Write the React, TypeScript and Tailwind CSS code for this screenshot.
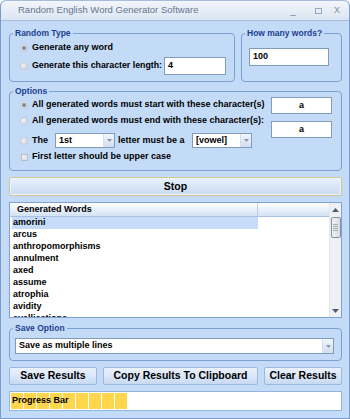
import type { ReactNode } from "react";

const words = ["amorini", "arcus", "anthropomorphisms", "annulment", "axed", "assume", "atrophia", "avidity", "avellications"];

function Radio({ checked }: { checked?: boolean }) {
	return (
		<span className="flex h-[8px] w-[8px] shrink-0 items-center justify-center rounded-full border border-[#c3c8d0] bg-linear-to-br from-[#f6f7f9] to-[#d3d8df]">
			{checked && <span className="h-[4px] w-[4px] rounded-full bg-[#7e8793]" />}
		</span>
	);
}

function Group({ title, className, children }: { title: string; className?: string; children: ReactNode }) {
	return (
		<fieldset className={`min-w-0 rounded-[4px] border border-[#7c9fd4] ${className ?? ""}`}>
			<legend className="ml-[3px] h-[10px] px-[2px] text-[8.5px] leading-[10px] font-bold text-[#1d3f91]">{title}</legend>
			{children}
		</fieldset>
	);
}

function Field({ value, className }: { value: string; className?: string }) {
	return (
		<div className={`flex shrink-0 items-center border border-[#7f9db9] bg-white text-[9px] font-bold text-black ${className ?? ""}`}>
			{value}
		</div>
	);
}

function Combo({ value, className }: { value: string; className?: string }) {
	return (
		<div className={`flex shrink-0 items-stretch border border-[#7f9db9] bg-white text-[9px] font-bold text-black ${className ?? ""}`}>
			<span className="flex flex-1 items-center pl-[3px]">{value}</span>
			<span className="flex w-[11px] items-center justify-center border-l border-[#d3deee] bg-linear-to-b from-[#f2f6fc] to-[#d2deef]">
				<svg width="5" height="3" viewBox="0 0 5 3">
					<path d="M0 0h5L2.5 3z" fill="#8a97ab" />
				</svg>
			</span>
		</div>
	);
}

function Btn({ label, className }: { label: string; className?: string }) {
	return (
		<button className={`flex h-[18px] items-center justify-center rounded-[2px] border border-[#9db8de] bg-linear-to-b from-[#eaf1fc] via-[#dbe7f8] to-[#c7d9f2] text-[10.5px] font-bold text-black ${className ?? ""}`}>
			{label}
		</button>
	);
}

export default function App() {
	return (
		<div className="flex h-[419px] w-[350px] flex-col overflow-hidden rounded-t-[6px] border-x border-b border-[#7c9acb] bg-[#c4dbf8] font-['Liberation_Sans',Arial,sans-serif]">
			<header className="flex h-[21px] shrink-0 items-center rounded-t-[6px] border-t border-b border-[#a6bddf] bg-linear-to-b from-[#f3f6fb] to-[#dbe5f3] pl-[17px] pr-[5px]">
				<span className="text-[9.5px] text-[#66768e]">Random English Word Generator Software</span>
				<div className="ml-auto flex items-center text-[10px] text-[#7b8ba3]">
					<span className="flex w-[16px] justify-center leading-none">_</span>
					<span className="ml-[9px] flex w-[16px] justify-center">
						<span className="h-[6px] w-[7px] border border-[#9aa8bd]" />
					</span>
					<span className="ml-[4px] flex w-[14px] justify-center text-[9px]">X</span>
				</div>
			</header>

			<main className="flex flex-1 flex-col whitespace-nowrap pl-[8px] pr-[7px] pt-[7px] text-[9px] font-bold text-black">
				<div className="flex items-stretch gap-[6px]">
					<Group title="Random Type" className="w-[226px] shrink-0">
						<div className="pb-[6px] pl-[10px] pr-[8px] pt-[4px]">
							<div className="flex h-[12px] items-center gap-[4px]">
								<Radio checked />
								<span>Generate any word</span>
							</div>
							<div className="mt-[3px] flex h-[18px] items-center justify-between">
								<div className="flex items-center gap-[4px]">
									<Radio />
									<span className="text-[8.8px]">Generate this character length:</span>
								</div>
								<Field value="4" className="h-[18px] w-[62px] pl-[3px]" />
							</div>
						</div>
					</Group>
					<Group title="How many words?" className="flex-1">
						<div className="pl-[7px] pt-[10px]">
							<Field value="100" className="h-[18px] w-[80px] pl-[3px]" />
						</div>
					</Group>
				</div>

				<Group title="Options" className="mt-[4px]">
					<div className="flex pb-[7px] pl-[10px] pr-[9px] pt-[1px]">
						<div className="flex flex-1 flex-col">
							<div className="flex h-[16px] items-center gap-[4px]">
								<Radio checked />
								<span>All generated words must start with these character(s)</span>
							</div>
							<div className="flex h-[16px] items-center gap-[4px]">
								<Radio />
								<span>All generated words must end with these character(s):</span>
							</div>
							<div className="mt-[4px] flex h-[15px] items-center">
								<Radio />
								<span className="ml-[4px] w-[23px]">The</span>
								<Combo value="1st" className="h-[15px] w-[60px]" />
								<span className="ml-[3px] w-[74px]">letter must be a</span>
								<Combo value="[vowel]" className="h-[15px] w-[60px]" />
							</div>
							<div className="mt-[3px] flex h-[12px] items-center gap-[4px]">
								<span className="ml-[1px] h-[7px] w-[7px] border border-[#b8bec8] bg-linear-to-br from-[#f4f5f7] to-[#dadee4]" />
								<span>First letter should be upper case</span>
							</div>
						</div>
						<div className="flex w-[61px] flex-col">
							<Field value="a" className="h-[17px] justify-center" />
							<Field value="a" className="mt-[7px] h-[17px] justify-center" />
						</div>
					</div>
				</Group>

				<button className="mt-[6px] h-[19px] w-full rounded-[2px] border border-[#d2c58e] bg-linear-to-b from-[#e9f1fc] via-[#d8e6f8] to-[#c9dbf3] text-[10.5px] font-bold shadow-[inset_0_0_0_1px_#eef4fd]">
					Stop
				</button>

				<div className="mt-[6px] flex h-[116px] border border-[#7ea1d6] bg-white">
					<div className="flex flex-1 flex-col overflow-hidden">
						<div className="flex h-[14px] shrink-0 border-b border-[#a9c1e4] bg-linear-to-b from-[#ffffff] to-[#d3e2f6]">
							<span className="flex w-[248px] items-center border-r border-[#b9cde9] pl-[7px]">Generated Words</span>
						</div>
						<div className="pl-[2px]">
							{words.map((w, i) => (
								<div key={w} className={`flex h-[12px] w-[246px] items-center pl-[1px] ${i === 0 ? "bg-[#c6dcf8]" : ""}`}>
									{w}
								</div>
							))}
						</div>
					</div>
					<div className="flex w-[12px] shrink-0 flex-col items-center border-l border-[#e3e6ea] bg-[#eef0f3]">
						<div className="flex h-[14px] items-center justify-center">
							<svg width="7" height="4" viewBox="0 0 7 4">
								<path d="M3.5 0L7 4H0z" fill="#4d5d78" />
							</svg>
						</div>
						<div className="flex h-[21px] w-[10px] flex-col items-center justify-center gap-[1px] rounded-[2px] border border-[#8391a7] bg-linear-to-r from-[#f0f2f5] to-[#d8dce2]">
							<span className="h-[1px] w-[5px] bg-[#a7afbc]" />
							<span className="h-[1px] w-[5px] bg-[#a7afbc]" />
							<span className="h-[1px] w-[5px] bg-[#a7afbc]" />
							<span className="h-[1px] w-[5px] bg-[#a7afbc]" />
						</div>
						<div className="mt-auto flex h-[12px] items-center justify-center">
							<svg width="7" height="4" viewBox="0 0 7 4">
								<path d="M0 0h7L3.5 4z" fill="#4d5d78" />
							</svg>
						</div>
					</div>
				</div>

				<Group title="Save Option" className="mt-[5px]">
					<div className="pb-[6px] pl-[5px] pr-[7px] pt-[5px]">
						<Combo value="Save as multiple lines" className="h-[16px]" />
					</div>
				</Group>

				<div className="mt-[6px] flex gap-[6px]">
					<Btn label="Save Results" className="w-[88px]" />
					<Btn label="Copy Results To Clipboard" className="w-[155px]" />
					<Btn label="Clear Results" className="flex-1" />
				</div>

				<div className="relative mt-[6px] flex h-[20px] gap-[1px] border border-[#94b3de] bg-white p-[1px]">
					{Array.from({ length: 9 }).map((_, i) => (
						<span key={i} className="w-[12px] bg-[#fdd64b]" />
					))}
					<span className="absolute left-[2px] top-0 flex h-full items-center text-[9px] font-bold text-black">Progress Bar</span>
				</div>
			</main>
		</div>
	);
}
